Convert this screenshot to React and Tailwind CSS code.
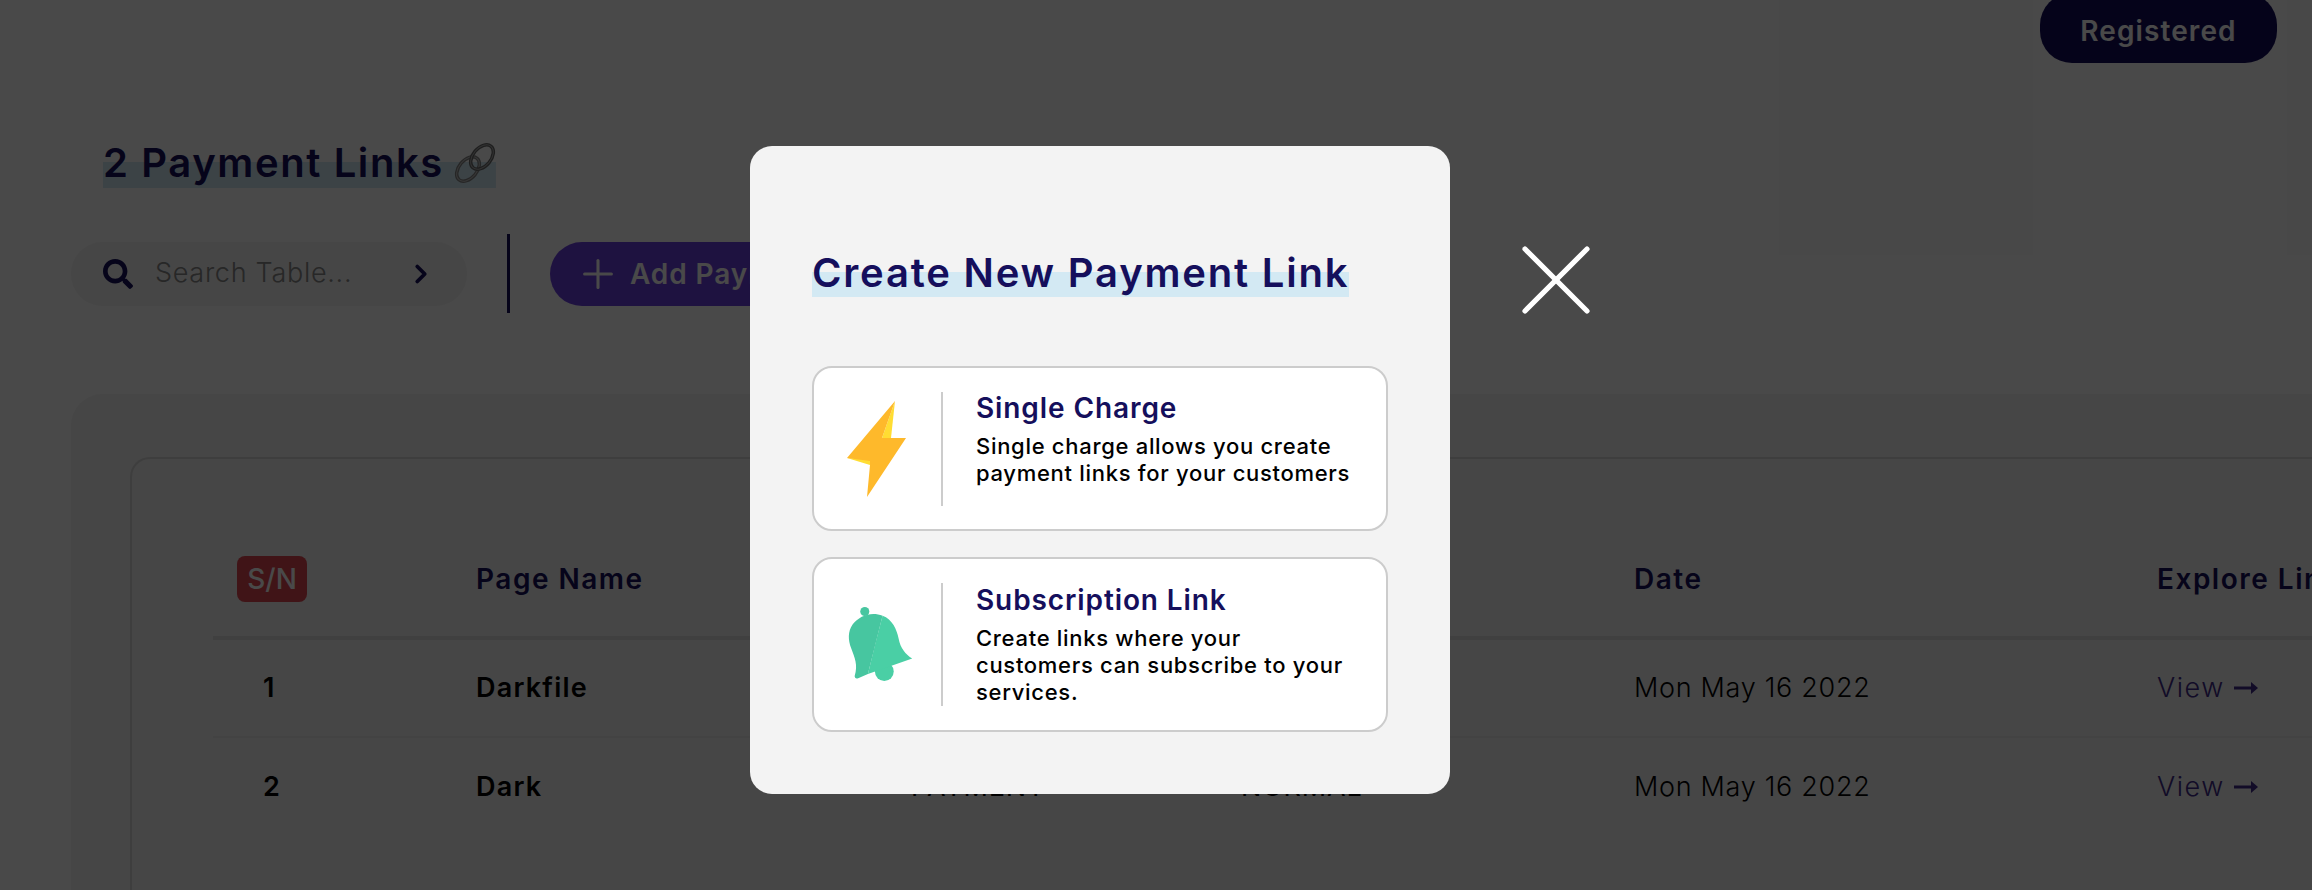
import { FaSearch } from 'react-icons/fa'
import { ChevronRight, Plus, X } from 'lucide-react'

function BoltIcon() {
  return (
    <svg viewBox="0 0 59 96" className="w-[59px] h-[96px] shrink-0">
      <polygon points="48,0 44,37 35,37" fill="#ffdd33" />
      <polygon points="0,57 23,64 23,58" fill="#ffdd33" />
      <polygon points="48,0 35,37 59,37 20,96 23,64 23,60 0,57" fill="#feb92b" />
    </svg>
  )
}

function BellIcon() {
  return (
    <svg viewBox="60 55 195 225" className="w-[68px] h-[79px] ml-[8px] shrink-0">
      <circle cx="167" cy="245" r="27" fill="#4acfa5" />
      <circle cx="111" cy="73" r="13" fill="#47c6a0" />
      <path d="M162 85C190 95 203 125 208 150C213 178 228 195 247 208L120 252L140 170Z" fill="#4acfa5" />
      <path d="M162 85C130 72 95 85 76 110C62 130 63 155 72 178C82 205 92 225 82 258C82 264 86 266 92 264L120 252Z" fill="#47c6a0" />
    </svg>
  )
}

function ChainIcon() {
  return (
    <svg viewBox="0 0 42 42" className="w-[42px] h-[42px] ml-[10px] shrink-0">
      <ellipse cx="14" cy="27" rx="9" ry="14" transform="rotate(40 14 27)" fill="none" stroke="#858585" strokeWidth="3.5" />
      <ellipse cx="14" cy="27" rx="9" ry="14" transform="rotate(40 14 27)" fill="none" stroke="#c4c4c4" strokeWidth="1" />
      <ellipse cx="28" cy="15" rx="9" ry="14" transform="rotate(40 28 15)" fill="none" stroke="#6a6a6a" strokeWidth="3.5" />
      <ellipse cx="28" cy="15" rx="9" ry="14" transform="rotate(40 28 15)" fill="none" stroke="#b0b0b0" strokeWidth="1" />
    </svg>
  )
}

function OptionCard({ icon, title, lines, height, dividerH, textClass }) {
  return (
    <div className={`flex items-center w-[576px] bg-white border-2 border-[#cccccc] rounded-[20px] ${height}`}>
      <div className="w-[127px] flex justify-center pr-[2px]">{icon}</div>
      <div className={`w-[2px] bg-[#cccccc] ${dividerH}`} />
      <div className={`pl-[33px] ${textClass}`}>
        <div className="text-[28px] leading-[34px] font-semibold text-[#150f5c] tracking-[0.9px]">{title}</div>
        <div className="mt-[8px] text-[22px] leading-[27px] font-[450] text-black tracking-[0.7px]">
          {lines.map((l) => (
            <div key={l}>{l}</div>
          ))}
        </div>
      </div>
    </div>
  )
}

function Row({ sn, name, type, mode, rowClass }) {
  return (
    <div className={`flex items-center text-[27px] text-black ${rowClass}`}>
      <div className="w-[263px] shrink-0 pl-[50px] font-semibold">{sn}</div>
      <div className="w-[435px] shrink-0 font-semibold tracking-[1.2px]">{name}</div>
      <div className="w-[330px] shrink-0 tracking-[0.8px]">{type}</div>
      <div className="w-[393px] shrink-0 tracking-[0.8px]">{mode}</div>
      <div className="w-[523px] shrink-0 font-light tracking-[0.7px]">Mon May 16 2022</div>
      <div className="flex items-center shrink-0 font-light text-[#3f2a8a] tracking-[1.5px]">
        View
        <svg viewBox="0 0 24 12" className="w-[24px] h-[12px] ml-[9px]">
          <path d="M0 6H20" stroke="#3f2a8a" strokeWidth="3" />
          <path d="M17 0L24 6L17 12Z" fill="#3f2a8a" />
        </svg>
      </div>
    </div>
  )
}

export default function App() {
  return (
    <div className="relative w-[2312px] h-[890px] overflow-hidden bg-[#ffffff] font-['Inter',sans-serif]">
      {/* page behind the dialog */}
      <div className="ml-[20px] h-full bg-[#fdfdfd]">
        <div className="flex justify-end pr-[35px]">
          <div className="w-[237px] h-[70px] -mt-[7px] flex items-center justify-center pt-[6px] rounded-[32px] bg-[#140d5c] text-white text-[28px] font-semibold tracking-[1.1px]">
            Registered
          </div>
        </div>

        <div className="pl-[83px] pt-[79px] flex">
          <div className="flex items-start h-[46px] bg-[linear-gradient(#d3e9f3,#d3e9f3)] bg-no-repeat bg-bottom bg-[length:100%_26px]">
            <span className="text-[40px] leading-[42px] font-semibold text-[#150f5c] tracking-[1.6px]">2 Payment Links</span>
            <ChainIcon />
          </div>
        </div>

        <div className="flex items-center pl-[51px] pt-[46px]">
          <div className="flex items-center w-[396px] h-[64px] rounded-[32px] bg-[#f3f3f3] pl-[32px]">
            <FaSearch className="w-[30px] h-[30px] text-[#150f5c]" />
            <span className="ml-[22px] w-[251px] shrink-0 text-[27px] font-light text-[#888888] tracking-[0.7px]">Search Table...</span>
            <ChevronRight className="w-[30px] h-[30px] text-[#150f5c]" strokeWidth={3} />
          </div>
          <div className="ml-[40px] w-[3px] h-[79px] bg-[#150f5c]" />
          <div className="ml-[40px] flex items-center w-[400px] h-[64px] rounded-[32px] bg-[#6b3fdf] pl-[25px] text-white text-[28px] font-semibold tracking-[0.9px] whitespace-nowrap">
            <Plus className="w-[46px] h-[46px] mr-[9px]" strokeWidth={1.6} />
            Add Payment Link
          </div>
        </div>

        {/* table card */}
        <div className="ml-[51px] mt-[81px] h-[600px] rounded-tl-[32px] bg-[#f3f3f3] pl-[59px] pt-[63px]">
          <div className="h-[600px] rounded-tl-[20px] border-l-2 border-t-2 border-[#d8d8d8] pl-[81px] pt-[97px]">
            <div className="flex items-center h-[46px] text-[28px] font-semibold text-[#150f5c] tracking-[1.5px]">
              <div className="w-[263px] shrink-0 pl-[24px]">
                <span className="inline-flex items-center justify-center w-[70px] h-[46px] rounded-[8px] bg-[#e04650] text-white font-medium tracking-normal">S/N</span>
              </div>
              <div className="w-[435px] shrink-0">Page Name</div>
              <div className="w-[330px] shrink-0">Type</div>
              <div className="w-[393px] shrink-0">Mode</div>
              <div className="w-[523px] shrink-0">Date</div>
              <div className="whitespace-nowrap shrink-0">Explore Link</div>
            </div>
            <div className="mt-[34px] h-[4px] bg-[#e0e0e0]" />
            <Row sn="1" name="Darkfile" type="PAYMENT" mode="NORMAL" rowClass="h-[98px] border-b-2 border-[#e8e8e8]" />
            <Row sn="2" name="Dark" type="PAYMENT" mode="NORMAL" rowClass="h-[98px]" />
          </div>
        </div>
      </div>

      {/* dialog overlay */}
      <div className="absolute inset-0 bg-black/[.715] flex items-start pl-[750px] pt-[146px]">
        <div className="w-[700px] h-[648px] rounded-[22px] bg-[#f3f3f3] px-[62px] pt-[105px]">
          <div className="inline-block h-[46px] bg-[linear-gradient(#d3e9f3,#d3e9f3)] bg-no-repeat bg-bottom bg-[length:100%_25px]">
            <span className="block text-[40px] leading-[44px] font-semibold text-[#150f5c] tracking-[1.8px] whitespace-nowrap">Create New Payment Link</span>
          </div>
          <div className="mt-[69px] flex flex-col gap-[26px]">
            <OptionCard
              icon={<BoltIcon />}
              title="Single Charge"
              lines={['Single charge allows you create', 'payment links for your customers']}
              height="h-[165px]"
              dividerH="h-[114px]"
              textClass="mb-[19px]"
            />
            <OptionCard
              icon={<BellIcon />}
              title="Subscription Link"
              lines={['Create links where your', 'customers can subscribe to your', 'services.']}
              height="h-[175px]"
              dividerH="h-[123px]"
              textClass=""
            />
          </div>
        </div>
        <X className="w-[124px] h-[124px] mt-[72px] ml-[44px] shrink-0 text-white" strokeWidth={1} />
      </div>
    </div>
  )
}
